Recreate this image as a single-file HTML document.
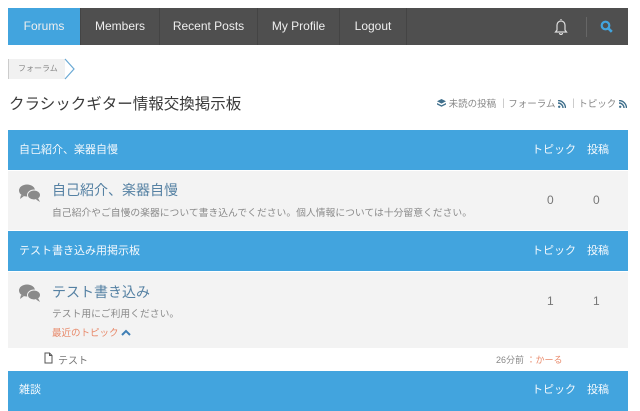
<!DOCTYPE html>
<html><head><meta charset="utf-8"><style>
*{margin:0;padding:0;box-sizing:border-box}
body{width:640px;height:409px;overflow:hidden;background:#fff;font-family:"Liberation Sans","Noto Sans CJK JP",sans-serif;position:relative}
.nav{position:absolute;left:8px;top:8px;width:620px;height:37px;background:#4f4f4f}
.nav div{position:absolute;top:0;height:37px;line-height:37px;color:#eee;font-size:12px;text-align:center;border-right:1px solid #444}
.blue{background:#42a4de}
.hdr{position:absolute;left:8px;width:620px;background:#42a4de;color:#f4f9fd;font-size:11px}
.hdr .t{position:absolute;left:11px}
.hdr .a{position:absolute;left:524px}
.hdr .b{position:absolute;left:579px}
.row{position:absolute;left:8px;width:620px;background:#f3f3f3}
.ttl{position:absolute;left:44px;font-size:14px;color:#5581a3}
.desc{position:absolute;left:44px;font-size:9.8px;color:#8a8a8a}
.num{position:absolute;font-size:12px;color:#777}
</style></head><body>
<div class="nav">
 <div class="blue" style="left:0;width:73px">Forums</div>
 <div style="left:73px;width:79px">Members</div>
 <div style="left:152px;width:98px">Recent Posts</div>
 <div style="left:250px;width:82px">My Profile</div>
 <div style="left:332px;width:67px">Logout</div>
 <svg style="position:absolute;left:546px;top:10px" width="14" height="17" viewBox="0 0 14 17"><path d="M7 1v1M3 12V7a4 4 0 0 1 8 0v5l1.5 2h-11z M5.5 15a1.5 1.5 0 0 0 3 0" fill="none" stroke="#ddd" stroke-width="1.2"/></svg>
 <div style="left:578px;top:9px;height:20px;border-right:1px solid #666;width:1px"></div>
 <svg style="position:absolute;left:592px;top:12px" width="13" height="13" viewBox="0 0 13 13"><circle cx="5.5" cy="5.5" r="3.8" fill="none" stroke="#42a4de" stroke-width="2.2"/><path d="M8.3 8.3l3.5 3.5" stroke="#42a4de" stroke-width="2.6"/></svg>
</div>
<div style="position:absolute;left:8px;top:59px;width:57px;height:20px;background:#f1f1f1;border-left:1px solid #ccc;font-size:8px;color:#888;line-height:20px;padding-left:9px">フォーラム</div>
<svg style="position:absolute;left:64px;top:58px" width="12" height="22" viewBox="0 0 12 22"><path d="M1 1l9 10-9 10" fill="none" stroke="#6aa9d4" stroke-width="1.2"/></svg>
<div style="position:absolute;left:9px;top:92px;font-size:15.5px;color:#3a3a3a;letter-spacing:0">クラシックギター情報交換掲示板</div>
<div style="position:absolute;left:437px;top:96px;font-size:9.5px;color:#888;white-space:nowrap"><svg width="9" height="9" viewBox="0 0 9 9" style="vertical-align:-1px"><path d="M4.5 0L9 2.3 4.5 4.6 0 2.3z M0 4l4.5 2.3L9 4v1.5L4.5 7.8 0 5.5z" fill="#3f6f8c"/></svg> 未読の投稿 ｜フォーラム <svg width="8" height="8" viewBox="0 0 8 8" style="vertical-align:-1px"><circle cx="1.2" cy="6.8" r="1.2" fill="#3f6f8c"/><path d="M0 3a5 5 0 0 1 5 5M0 0.5a7.5 7.5 0 0 1 7.5 7.5" fill="none" stroke="#3f6f8c" stroke-width="1.4"/></svg> ｜トピック <svg width="8" height="8" viewBox="0 0 8 8" style="vertical-align:-1px"><circle cx="1.2" cy="6.8" r="1.2" fill="#3f6f8c"/><path d="M0 3a5 5 0 0 1 5 5M0 0.5a7.5 7.5 0 0 1 7.5 7.5" fill="none" stroke="#3f6f8c" stroke-width="1.4"/></svg></div>

<div class="hdr" style="top:130px;height:40px;line-height:40px"><span class="t">自己紹介、楽器自慢</span><span class="a">トピック</span><span class="b">投稿</span></div>
<div class="row" style="top:171px;height:59px">
 <svg style="position:absolute;left:11px;top:13px" width="22" height="18" viewBox="0 0 22 18"><ellipse cx="8" cy="6.5" rx="8" ry="6" fill="#8a8a8a"/><path d="M2 11l-1 4 4-3z" fill="#8a8a8a"/><ellipse cx="15" cy="11" rx="6.5" ry="5" fill="#8a8a8a" stroke="#f3f3f3" stroke-width="1"/><path d="M19 14l2 4-4-2.5z" fill="#8a8a8a"/></svg>
 <div class="ttl" style="top:9px">自己紹介、楽器自慢</div>
 <div class="desc" style="top:34px">自己紹介やご自慢の楽器について書き込んでください。個人情報については十分留意ください。</div>
 <div class="num" style="left:539px;top:22px">0</div><div class="num" style="left:585px;top:22px">0</div>
</div>
<div class="hdr" style="top:231px;height:40px;line-height:40px"><span class="t">テスト書き込み用掲示板</span><span class="a">トピック</span><span class="b">投稿</span></div>
<div class="row" style="top:272px;height:76px">
 <svg style="position:absolute;left:11px;top:12px" width="22" height="18" viewBox="0 0 22 18"><ellipse cx="8" cy="6.5" rx="8" ry="6" fill="#8a8a8a"/><path d="M2 11l-1 4 4-3z" fill="#8a8a8a"/><ellipse cx="15" cy="11" rx="6.5" ry="5" fill="#8a8a8a" stroke="#f3f3f3" stroke-width="1"/><path d="M19 14l2 4-4-2.5z" fill="#8a8a8a"/></svg>
 <div class="ttl" style="top:10px">テスト書き込み</div>
 <div class="desc" style="top:34px">テスト用にご利用ください。</div>
 <div style="position:absolute;left:44px;top:53px;font-size:9.5px;color:#e8896a">最近のトピック <svg width="10" height="7" viewBox="0 0 10 7"><path d="M1 6l4-4 4 4" fill="none" stroke="#3f7fb5" stroke-width="2"/></svg></div>
 <div class="num" style="left:539px;top:22px">1</div><div class="num" style="left:585px;top:22px">1</div>
</div>
<svg style="position:absolute;left:44px;top:352px" width="9" height="12" viewBox="0 0 9 12"><path d="M1 1h4.5L8 3.5V11H1z M5.5 1v2.5H8" fill="none" stroke="#555" stroke-width="1"/></svg>
<div style="position:absolute;left:58px;top:352px;font-size:10px;color:#777">テスト</div>
<div style="position:absolute;left:496px;top:353px;font-size:9px;color:#888">26分前 <span style="color:#e8896a">：かーる</span></div>
<div class="hdr" style="top:371px;height:40px;line-height:38px"><span class="t">雑談</span><span class="a">トピック</span><span class="b">投稿</span></div>
</body></html>
